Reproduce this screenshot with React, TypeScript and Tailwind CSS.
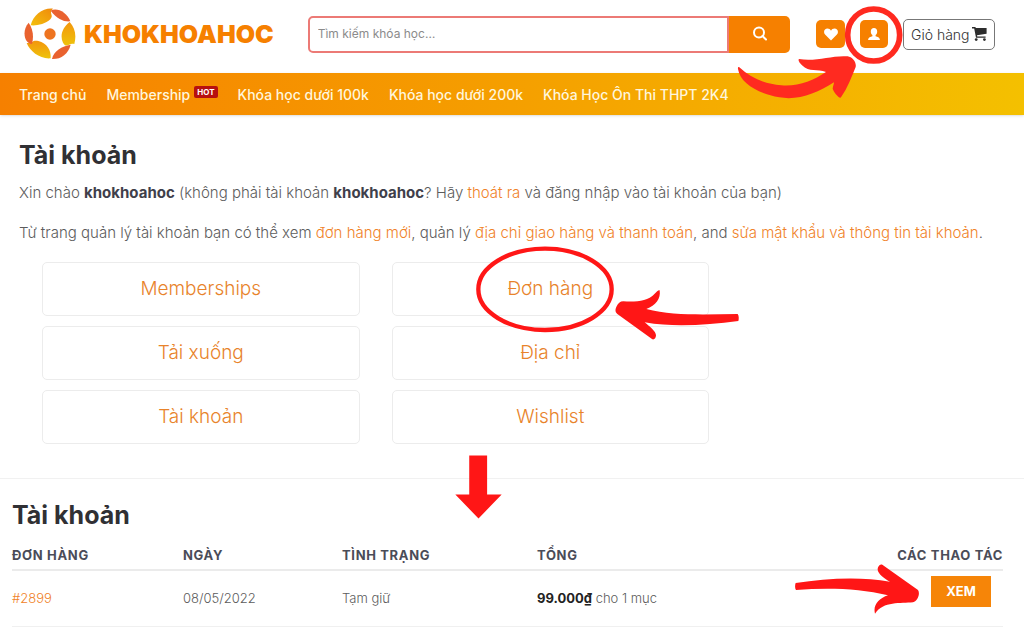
import type { ReactNode } from 'react';

const navItems = [
  { label: 'Trang chủ' },
  { label: 'Membership', hot: true },
  { label: 'Khóa học dưới 100k' },
  { label: 'Khóa học dưới 200k' },
  { label: 'Khóa Học Ôn Thi THPT 2K4' },
];

const cards = ['Memberships', 'Đơn hàng', 'Tải xuống', 'Địa chỉ', 'Tài khoản', 'Wishlist'];

function Logo() {
  return (
    <a href="#" className="flex items-center gap-2 text-[#f68000]">
      <svg viewBox="71 23 156 156" className="h-13 w-13 shrink-0" aria-hidden="true">
        <defs>
          <linearGradient id="gold" x1="0" y1="1" x2="1" y2="0">
            <stop offset="0" stopColor="#f3c00c" />
            <stop offset="1" stopColor="#f08a0c" />
          </linearGradient>
          <linearGradient id="goldDown" x1="0" y1="0" x2="0" y2="1">
            <stop offset="0" stopColor="#f3960c" />
            <stop offset="1" stopColor="#eec30c" />
          </linearGradient>
        </defs>
        <circle cx="149" cy="101" r="17" fill="#ee7420" />
        <path d="M91 75C99 44 127 22 158 25C143 38 162 43 150 57C135 72 107 77 91 75Z" fill="url(#gold)" />
        <path d="M151 31C168 20 200 34 210 63C190 65 171 56 151 31Z" fill="#e9622f" />
        <path d="M208 65C224 82 229 105 222 131C206 125 199 147 188 127C178 107 186 81 208 65Z" fill="url(#goldDown)" />
        <path d="M211 133C204 161 182 177 155 176C159 153 185 137 211 133Z" fill="#e9622f" />
        <path d="M151 174C119 177 89 153 79 128C98 130 94 118 114 122C140 129 153 149 151 174Z" fill="url(#goldDown)" />
        <path d="M85 67C98 86 101 108 95 131C71 131 64 89 85 67Z" fill="#e9622f" />
      </svg>
      <span className="text-[25px] leading-8 font-black">KHOKHOAHOC</span>
    </a>
  );
}

function AccountMark() {
  return (
    <svg
      viewBox="112 15 498 288"
      className="pointer-events-none absolute -top-[15px] -left-[123px] z-10 h-24 w-[166px] max-w-none"
      aria-hidden="true"
    >
      <circle cx="522" cy="105" r="78" fill="none" stroke="#ff2a20" strokeWidth="17" />
      <path
        d="M119 202C154 234 194 252 245 256C296 260 340 242 379 216C353 206 329 218 307 196C299 188 294 180 298 177C349 186 397 165 444 169C458 171 471 187 468 201C456 231 444 263 424 292C419 298 401 274 399 266C400 259 403 251 403 247C353 280 295 302 239 292C177 280 122 252 115 207C114 202 116 200 119 202Z"
        fill="#ff2a20"
      />
    </svg>
  );
}

function OrdersMark() {
  return (
    <svg
      viewBox="45 18 795 285"
      className="pointer-events-none absolute -top-4 left-1/2 z-10 -ml-[75px] h-[95px] w-[265px] max-w-none"
      aria-hidden="true"
    >
      <ellipse cx="255" cy="148" rx="200" ry="122" fill="none" stroke="#ff1616" strokeWidth="13" />
      <path
        d="M470 199C474 190 480 184 490 184C530 186 562 184 584 161C590 155 596 149 599 151C603 177 587 196 559 207C640 228 735 223 833 222C837 227 837 239 835 243C742 254 650 264 554 247C568 259 588 274 588 286C588 294 583 300 577 298L472 222C464 216 466 207 470 199Z"
        fill="#ff1616"
      />
    </svg>
  );
}

function ViewMark() {
  return (
    <svg
      viewBox="45 100 375 150"
      className="pointer-events-none absolute -top-3 right-full z-10 mr-[11px] h-[50px] w-[125px] max-w-none"
      aria-hidden="true"
    >
      <path
        d="M47 157C138 143 240 137 330 153C312 143 294 129 293 117C293 107 300 100 307 102L414 178C421 187 414 212 399 215C362 219 310 211 285 249C278 223 297 203 324 194C238 173 143 171 48 178C44 172 45 162 47 157Z"
        fill="#ff1616"
      />
    </svg>
  );
}

function TextLink({ children }: { children: ReactNode }) {
  return (
    <a href="#" className="text-[#f08228]">
      {children}
    </a>
  );
}

function Header() {
  return (
    <header>
      <div className="flex h-[73px] items-center pr-[29px] pb-[5px] pl-6">
        <Logo />
        <form className="ml-[34px] flex h-[37px] flex-1" onSubmit={(e) => e.preventDefault()}>
          <input
            type="search"
            aria-label="Tìm kiếm khóa học"
            placeholder="Tìm kiếm khóa học…"
            className="min-w-0 flex-1 rounded-l-[5px] border-2 border-[#ec7a76] bg-white px-2 text-[12px] outline-none placeholder:text-[#8b8b8b]"
          />
          <button
            type="submit"
            aria-label="Tìm kiếm"
            className="flex w-[61px] items-center justify-center rounded-r-[5px] bg-[#f68000] text-white"
          >
            <svg viewBox="0 0 16 16" className="h-4 w-4" fill="none" stroke="currentColor" strokeWidth="2" aria-hidden="true">
              <circle cx="7" cy="6.5" r="5" />
              <path d="M10.5 10L14 13.5" strokeLinecap="round" />
            </svg>
          </button>
        </form>
        <button
          type="button"
          aria-label="Yêu thích"
          className="ml-[26px] flex h-7 w-[29px] items-center justify-center rounded-[5px] bg-[#f68000] text-white"
        >
          <svg viewBox="0 0 14 13" className="h-[13px] w-3.5" fill="currentColor" aria-hidden="true">
            <path d="M7 12.5L1.3 6.8C-1.3 4.1.5.6 3.5.6C5 .6 6.3 1.3 7 2.7C7.7 1.3 9 .6 10.5.6C13.5.6 15.3 4.1 12.7 6.8Z" />
          </svg>
        </button>
        <div className="relative ml-[15px]">
          <button
            type="button"
            aria-label="Tài khoản"
            className="flex h-7 w-7 items-center justify-center rounded-[5px] bg-[#f68000] text-white"
          >
            <svg viewBox="0 0 12 12" className="h-3 w-3" fill="currentColor" aria-hidden="true">
              <path d="M6 0C8 0 9.2 1.4 9.2 3.4C9.2 5 8.5 6.3 7.6 7.1V8.2C9.6 8.6 11.5 9.3 12 12H0C.5 9.3 2.4 8.6 4.4 8.2V7.1C3.5 6.3 2.8 5 2.8 3.4C2.8 1.4 4 0 6 0Z" />
            </svg>
          </button>
          <AccountMark />
        </div>
        <button
          type="button"
          className="ml-[15px] flex h-[31px] w-[92px] items-center justify-between rounded-[5px] border border-[#777] px-[7px] text-[14px] font-light whitespace-nowrap text-[#333]"
        >
          Giỏ hàng
          <svg viewBox="0 0 15 14" className="h-3.5 w-[15px] shrink-0" fill="#2d2d2d" aria-hidden="true">
            <path d="M0 0H3.4L3.8 1H14.6V6.8L5 8.2L5.2 9.4H13.6V10.8H4L2.2 1.5H0Z" />
            <circle cx="4.2" cy="12.6" r="1.4" />
            <circle cx="12.4" cy="12.6" r="1.4" />
          </svg>
        </button>
      </div>
      <nav className="h-[42px] bg-linear-to-r from-[#f68000] via-[#f59f00] to-[#f4c000] px-[19px] shadow-sm">
        <ul className="flex h-full items-center gap-5 text-[14px] font-medium whitespace-nowrap text-[#fff6dc]">
          {navItems.map((item) => (
            <li key={item.label} className="flex items-center gap-1">
              <a href="#">{item.label}</a>
              {item.hot && (
                <span className="mb-1 rounded-[2px] bg-[#b71010] px-[3px] text-[8px] leading-3 font-bold text-white">HOT</span>
              )}
            </li>
          ))}
        </ul>
      </nav>
    </header>
  );
}

function Dashboard() {
  return (
    <section className="px-[19px] pt-6 pb-[34px]">
      <h1 className="text-[25px] leading-8 font-bold text-[#303034]">Tài khoản</h1>
      <p className="mt-3 text-[15px] leading-5 font-light">
        Xin chào <strong className="font-bold text-[#3f3f4b]">khokhoahoc</strong> (không phải tài khoản{' '}
        <strong className="font-bold text-[#3f3f4b]">khokhoahoc</strong>? Hãy <TextLink>thoát ra</TextLink> và đăng nhập
        vào tài khoản của bạn)
      </p>
      <p className="mt-5 text-[15px] leading-5 font-light">
        Từ trang quản lý tài khoản bạn có thể xem <TextLink>đơn hàng mới</TextLink>, quản lý{' '}
        <TextLink>địa chỉ giao hàng và thanh toán</TextLink>, and{' '}
        <TextLink>sửa mật khẩu và thông tin tài khoản</TextLink>.
      </p>
      <ul className="mt-[19px] ml-[23px] grid max-w-[667px] grid-cols-2 gap-x-8 gap-y-2.5">
        {cards.map((label) => (
          <li key={label} className="relative">
            <a
              href="#"
              className="flex h-[54px] items-center justify-center rounded-[5px] border border-[#ececec] text-[19px] font-light text-[#e8832b]"
            >
              {label}
            </a>
            {label === 'Đơn hàng' && <OrdersMark />}
          </li>
        ))}
      </ul>
    </section>
  );
}

function Orders() {
  return (
    <section className="relative border-t border-[#f1f1f1] pt-5 pr-[21px] pl-3">
      <svg
        viewBox="75 43 142 192"
        className="pointer-events-none absolute -top-6 left-[455px] z-10 h-16 w-[47px]"
        aria-hidden="true"
      >
        <path d="M118 44H172V162H216L146 234L76 162H118Z" fill="#ff1616" />
      </svg>
      <h2 className="text-[25px] leading-8 font-bold text-[#303034]">Tài khoản</h2>
      <table className="mt-3 w-full table-fixed border-collapse text-left text-[13px]">
        <colgroup>
          <col className="w-[171px]" />
          <col className="w-[159px]" />
          <col className="w-[195px]" />
          <col />
          <col className="w-[130px]" />
        </colgroup>
        <thead>
          <tr className="h-[27px] border-b-2 border-[#ebebeb] align-top text-[13px] leading-6 tracking-wider text-[#4a4c58]">
            <th className="font-bold">ĐƠN HÀNG</th>
            <th className="font-bold">NGÀY</th>
            <th className="font-bold">TÌNH TRẠNG</th>
            <th className="font-bold">TỔNG</th>
            <th className="text-right font-bold whitespace-nowrap">CÁC THAO TÁC</th>
          </tr>
        </thead>
        <tbody>
          <tr className="h-14 border-b border-[#f0f0f0] font-light">
            <td>
              <TextLink>#2899</TextLink>
            </td>
            <td>08/05/2022</td>
            <td>Tạm giữ</td>
            <td>
              <strong className="font-bold text-[#222]">99.000₫</strong> cho 1 mục
            </td>
            <td className="pt-[5px] pr-3 align-top">
              <div className="relative ml-auto w-[60px]">
                <button type="button" className="block h-[31px] w-full bg-[#f68508] text-[13px] font-bold text-white">
                  XEM
                </button>
                <ViewMark />
              </div>
            </td>
          </tr>
        </tbody>
      </table>
    </section>
  );
}

export default function App() {
  return (
    <div className="min-h-screen overflow-x-hidden bg-white font-[Inter,'Noto_Sans',sans-serif] text-[#5c5c5c]">
      <Header />
      <main>
        <Dashboard />
        <Orders />
      </main>
    </div>
  );
}
